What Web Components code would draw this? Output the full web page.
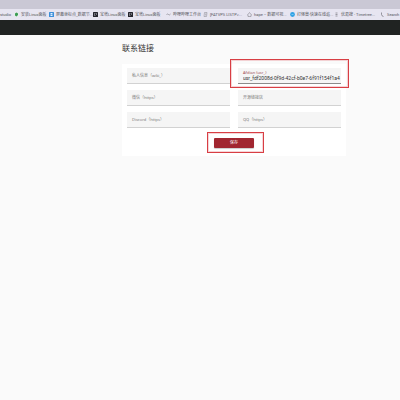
<!DOCTYPE html>
<html lang="zh-CN">
<head>
<meta charset="utf-8">
<title>联系链接</title>
<style>
body{margin:0;min-height:100vh;background:#fafafa;color:#333;font-family:Roboto,"Noto Sans CJK SC",sans-serif}
</style>
</head>
<body>
<app-page></app-page>
<script>
const define=(name,html,setup)=>customElements.define(name,class extends HTMLElement{
  constructor(){super();this.attachShadow({mode:'open'});}
  connectedCallback(){
    if(this.shadowRoot.childNodes.length)return;
    const t=document.createElement('template');
    t.innerHTML=html;
    this.shadowRoot.append(t.content.cloneNode(true));
    if(setup)setup(this,this.shadowRoot);
  }
});

const icons={
  leaf:'<rect x="1" y="1" width="8" height="8" rx="2" fill="#e3f0e5"/><path d="M5 1 8 3v3L5 9 2 7V3Z" fill="#3d9c55"/>',
  blue:'<rect width="10" height="10" rx="1" fill="#3c8fda"/><path d="M3 2h4v2H5v1h2v3H3V6h2V5H3Z" fill="#e4f1ff"/>',
  dark:'<rect width="10" height="10" rx="1" fill="#25252d"/><path d="M2 3h3M2 5h2M2 7h3M6 3h2M6 5h2" stroke="#c5c5cf" stroke-width="1"/>',
  dash:'<path d="M1 5q2-2 4 0t4-1" fill="none" stroke="#85858d" stroke-width="1.4"/>',
  page:'<path d="M3 1h5L7 9H2ZM4 4h3M4 6h2" fill="none" stroke="#85858d"/>',
  home:'<path d="M1 6 5 1l4 5H8v3H2V6Z" fill="none" stroke="#77777f"/>',
  sky:'<circle cx="5" cy="5" r="4.8" fill="#31a2e4"/><path d="M3 5h4" stroke="#8bd0f5" stroke-width="1.5"/>',
  list:'<path d="M3 2h4M3 5h4M3 8h4" stroke="#707078" stroke-width="1.3"/>',
  tail:'<path d="M3 1v4q0 3 4 4" fill="none" stroke="#707078" stroke-width="1.4"/>'
};

define('book-mark',`<style>
:host{display:block;min-width:0}
a{display:flex;align-items:center;gap:2px;color:#55555c;text-decoration:none;font-size:4px;line-height:8px;white-space:nowrap}
svg{width:5px;height:5px;flex:none}
</style><a href="#"><svg viewBox="0 0 10 10" aria-hidden="true"></svg><span><slot></slot></span></a>`,
(el,root)=>{
  const svg=root.querySelector('svg'),icon=el.getAttribute('icon');
  if(icon)svg.innerHTML=icons[icon];else svg.remove();
});

define('browser-bar',`<style>
:host{display:block;overflow:hidden}
.tabs{height:9px;background:#cac8d5}
nav{display:grid;grid-template-columns:14px 35px 44px 35px 38px 37px 44px 43px 44px 46px auto;align-items:center;height:11px;background:#e7e5f1}
</style><div class="tabs"></div>
<nav aria-label="书签">
<book-mark>studio</book-mark>
<book-mark icon="leaf">安装Linux面板</book-mark>
<book-mark icon="blue">屏幕坐标点_数据节...</book-mark>
<book-mark icon="dark">宝塔Linux面板</book-mark>
<book-mark icon="dark">宝塔Linux面板</book-mark>
<book-mark icon="dash">哔哩哔哩工作台</book-mark>
<book-mark icon="page">[FATVPS LISTP&gt;...</book-mark>
<book-mark icon="home">hape – 数据可视...</book-mark>
<book-mark icon="sky">打怪兽-快速在线追...</book-mark>
<book-mark icon="list">优易搜 - Timetree...</book-mark>
<book-mark icon="tail">Search</book-mark>
</nav>`);

define('site-header',`<style>:host{display:block}header{height:15px;background:#202322}</style><header></header>`);

define('text-field',`<style>
:host{display:block;min-width:0}
label{display:flex;align-items:center;gap:2px;box-sizing:border-box;height:16px;padding:0 5px;background:#f5f5f5;border-bottom:1px solid #d2d2d2;font-family:"Noto Sans","Noto Sans CJK SC",sans-serif;font-size:4px;line-height:6px;color:#777}
span{white-space:nowrap}
input{flex:1;min-width:0;width:100%;box-sizing:border-box;padding:0;border:0;outline:0;background:transparent;color:#333;font:inherit}
:host([filled]) label{flex-direction:column;align-items:stretch;justify-content:flex-end;gap:0;padding:0 0 1px 5px;border-color:#8b8b8b}
:host([filled]) span{line-height:5px;color:#a24e56}
:host([filled]) input{flex:none;height:7px;font-family:Roboto,sans-serif;font-size:5px;line-height:7px}
</style><label><span></span><input type="text"></label>`,
(el,root)=>{
  root.querySelector('span').textContent=el.getAttribute('label');
  root.querySelector('input').value=el.getAttribute('value')||'';
});

define('save-button',`<style>
:host{display:block}
button{display:block;width:40px;height:10px;padding:0;border:0;border-radius:1px;background:#a12630;color:#fff;font:inherit;font-size:4px;line-height:10px;box-shadow:0 1px 1px #0003}
</style><button type="submit"><slot></slot></button>`);

define('mark-box',`<style>
:host{display:block;position:relative;min-width:0}
i{position:absolute;inset:-9px -8px -4px;border:1px solid #d83e44;outline:1px solid #e8969a66;outline-offset:-2px;pointer-events:none}
:host([tight]) i{inset:-6px -10px -5px -7px}
</style><slot></slot><i></i>`);

define('link-form',`<style>
:host{display:block}
form{display:grid;grid-template-columns:1fr 1fr;gap:6px 8px;padding:4px 5px 8px;background:#fff}
.actions{grid-column:1/-1;display:flex;justify-content:center;padding-top:4px}
</style><form>
<text-field label="私人信息（wiki_）"></text-field>
<mark-box><text-field filled label="Afdian (usr_)" value="usr_fdf2008d-0f9d-42cf-b0e7-6f91f154f1a4"></text-field></mark-box>
<text-field label="微信（https）"></text-field>
<text-field label="开源链接店"></text-field>
<text-field label="Discord（https）"></text-field>
<text-field label="QQ（https）"></text-field>
<div class="actions"><mark-box tight><save-button>保存</save-button></mark-box></div>
</form>`);

define('app-page',`<style>
:host{display:block}
main{padding:8px 54px 0 122px}
h1{margin:0 0 9px;font-size:8px;line-height:12px;font-weight:400;color:#333}
</style>
<browser-bar></browser-bar><site-header></site-header>
<main><h1>联系链接</h1><link-form></link-form></main>`);
</script>
</body>
</html>
